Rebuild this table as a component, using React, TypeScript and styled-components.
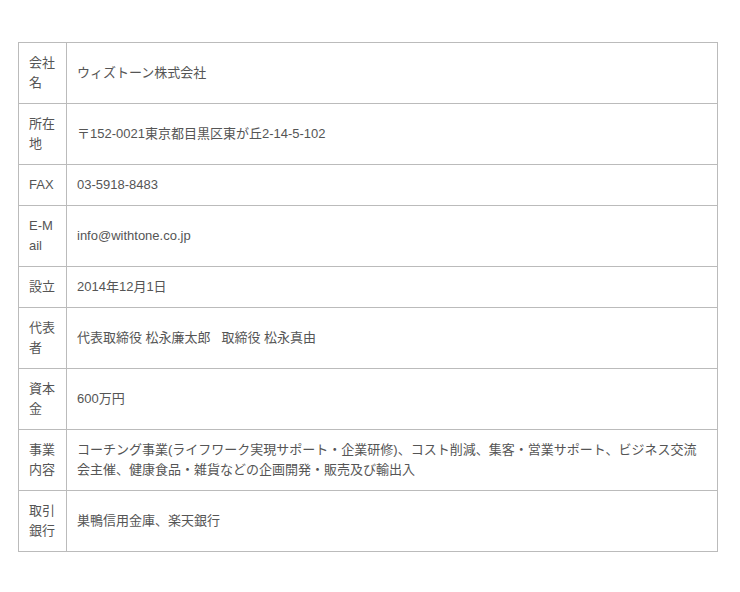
import styled, { createGlobalStyle } from "styled-components";

const GlobalStyle = createGlobalStyle`
  body {
    margin: 0;
    background: #fff;
    font-family: "Liberation Sans", Arial, "Noto Sans CJK JP", sans-serif;
    color: #555;
  }
`;

const Page = styled.div`
  padding: 42px 22px 40px 18px;
`;

const Table = styled.table`
  width: 700px;
  border-collapse: collapse;
  table-layout: fixed;
  font-size: 13px;
  line-height: 20px;
`;

const Head = styled.th`
  width: 27px;
  padding: 10px;
  border: 1px solid #bbb;
  font-weight: normal;
  text-align: left;
  vertical-align: top;
  word-break: break-all;
`;

const Cell = styled.td`
  padding: 10px;
  border: 1px solid #bbb;
  vertical-align: middle;
`;

const rows: [string, string][] = [
  ["会社名", "ウィズトーン株式会社"],
  ["所在地", "〒152-0021東京都目黒区東が丘2-14-5-102"],
  ["FAX", "03-5918-8483"],
  ["E-Mail", "info@withtone.co.jp"],
  ["設立", "2014年12月1日"],
  ["代表者", "代表取締役 松永廉太郎\u00a0\u00a0 取締役 松永真由"],
  ["資本金", "600万円"],
  [
    "事業内容",
    "コーチング事業(ライフワーク実現サポート・企業研修)、コスト削減、集客・営業サポート、ビジネス交流会主催、健康食品・雑貨などの企画開発・販売及び輸出入",
  ],
  ["取引銀行", "巣鴨信用金庫、楽天銀行"],
];

export default function App() {
  return (
    <>
      <GlobalStyle />
      <Page>
        <Table>
          <tbody>
            {rows.map(([label, value]) => (
              <tr key={label}>
                <Head>{label}</Head>
                <Cell>{value}</Cell>
              </tr>
            ))}
          </tbody>
        </Table>
      </Page>
    </>
  );
}
